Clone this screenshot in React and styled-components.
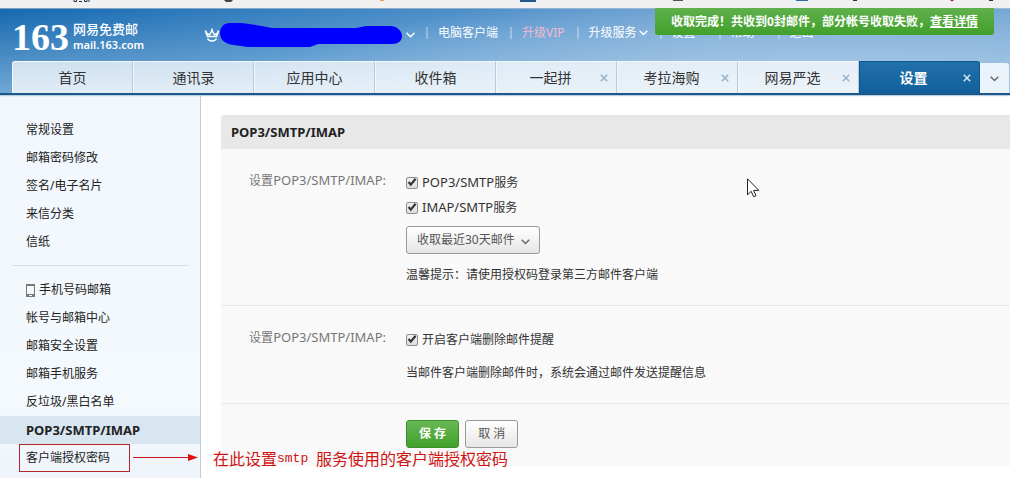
import styled, { createGlobalStyle, css } from "styled-components";

const GlobalStyle = createGlobalStyle`
  * {
    box-sizing: border-box;
  }
  body {
    margin: 0;
    background: #fff;
    color: #333;
    font: 12px/18px "Noto Sans", "Noto Sans CJK SC", sans-serif;
    overflow-x: hidden;
  }
  a {
    color: inherit;
    text-decoration: none;
  }
  button, select, input {
    font: inherit;
  }
  ul {
    list-style: none;
    margin: 0;
    padding: 0;
  }
`;

const Page = styled.div`
  display: flex;
  flex-direction: column;
  min-height: 100vh;
`;

const BrowserStrip = styled.div`
  height: 8px;
  background: #f0f0f0;
  overflow: hidden;
  svg {
    display: block;
  }
`;

const Header = styled.header`
  position: relative;
  border-bottom: 2px solid #1f5888;
  box-shadow: 0 1px 1px #b4cfe6, inset 0 1px 0 rgba(190, 200, 210, 0.6);
  background: radial-gradient(ellipse 60% 120% at 82% 100%, #a9c9e6 0%, rgba(150, 188, 224, 0) 100%),
    linear-gradient(to bottom, rgba(255, 255, 255, 0) 0%, rgba(176, 210, 236, 0.6) 100%),
    linear-gradient(to right, #1468b0 0%, #3f86c4 35%, #699fd1 70%, #6da2d3 100%);
`;

const TopRow = styled.div`
  display: flex;
  align-items: center;
  height: 53px;
  padding: 0 12px;
  color: #fff;
`;

const Logo = styled.a`
  display: flex;
  align-items: center;
  gap: 4px;
  width: 192px;
  padding-top: 4px;
  strong {
    font: bold 38px/44px "Liberation Serif", serif;
  }
  span {
    display: flex;
    flex-direction: column;
    font-size: 11px;
    font-weight: 600;
    line-height: 15px;
  }
  b {
    font-size: 13px;
    font-weight: 500;
  }
`;

const Account = styled.div`
  display: flex;
  align-items: center;
  width: 222px;
  svg {
    display: block;
    flex: none;
  }
`;

const TopLinks = styled.nav`
  display: flex;
  align-items: center;
  padding-bottom: 4px;
  white-space: nowrap;
  a {
    display: flex;
    align-items: center;
    gap: 2px;
    min-width: 59px;
    padding: 0 12px 0 10px;
    border-left: 2px solid rgba(255, 255, 255, 0.3);
    line-height: 12px;
  }
`;

const VipLink = styled.a`
  color: #f5b9cf;
`;

const Notice = styled.div`
  position: absolute;
  top: 0;
  right: 16px;
  padding: 4px 16px;
  border-radius: 0 0 3px 3px;
  background: linear-gradient(#60b04c, #41a02b);
  color: #fff;
  font-weight: bold;
  line-height: 19px;
  white-space: nowrap;
  a {
    text-decoration: underline;
  }
`;

const Tabs = styled.nav`
  display: flex;
  align-items: flex-end;
  padding: 0 1px 0 12px;
`;

const Tab = styled.div`
  display: flex;
  flex: 1;
  align-items: center;
  height: 32px;
  border-top: 1px solid #f2f8fc;
  border-right: 1px solid #b5cbdd;
  border-left: 1px solid #f2f8fc;
  background: linear-gradient(to bottom, rgba(255, 255, 255, 0.72), rgba(255, 255, 255, 0.78));
  font-size: 14px;
  &:first-child {
    border-top-left-radius: 3px;
  }
  a {
    flex: 1;
    padding-right: ${(props) => (props.$closable ? "12px" : "0")};
    text-align: center;
  }
  button {
    width: 24px;
    margin-left: -24px;
    padding: 0;
    border: 0;
    background: none;
    color: #98b4cb;
    line-height: 0;
  }
  ${(props) =>
    props.$active &&
    css`
      border-color: #10558f;
      border-radius: 0 3px 0 0;
      background: linear-gradient(#2270ab, #10609d);
      color: #fff;
      font-weight: bold;
      button {
        color: #d3e3f0;
      }
    `}
`;

const MoreTabs = styled.button`
  width: 29px;
  height: 30px;
  padding: 0;
  border: 0;
  border-radius: 0 3px 0 0;
  background: #ebf3fa;
  color: #666;
`;

const Body = styled.div`
  display: flex;
  flex: 1;
`;

const Sidebar = styled.aside`
  flex: none;
  width: 201px;
  padding: 21px 0 6px;
  border-right: 1px solid #c3ccd2;
  background: linear-gradient(#f1f7fd, #f4f9fd 80%, #eef4fa);
  color: #222;
`;

const MenuGroup = styled.ul`
  & + & {
    margin: 9px 0 0;
    padding-top: 11px;
    position: relative;
  }
  & + &::before {
    content: "";
    position: absolute;
    top: 0;
    left: 12px;
    right: 11px;
    border-top: 1px solid #d9e1e6;
  }
`;

const MenuItem = styled.li`
  position: relative;
  padding-left: 26px;
  line-height: 28px;
  a {
    display: flex;
    align-items: center;
    gap: 4px;
  }
  ${(props) =>
    props.$active &&
    css`
      background: #d8e6f1;
      font-size: 13px;
      font-weight: bold;
    `}
`;

const Callout = styled.div`
  position: absolute;
  z-index: 1;
  top: 0;
  left: 19px;
  display: flex;
  align-items: center;
  color: #d01414;
  font: 16px/28px "Noto Sans CJK SC", sans-serif;
  white-space: nowrap;
  pointer-events: none;
  i {
    width: 111px;
    height: 28px;
    border: 1px solid #b5262c;
  }
  svg {
    margin: 0 14px 0 3px;
  }
  code {
    font: 13px "Liberation Mono", monospace;
    white-space: pre;
  }
`;

const Main = styled.main`
  flex: 1;
  padding: 20px 0 12px 20px;
`;

const Panel = styled.form`
  border-radius: 3px 0 0 0;
  background: #f9f9f9;
  overflow: hidden;
  h2 {
    margin: 0;
    padding: 0 10px;
    background: #e8e8e8;
    color: #222;
    font-size: 13px;
    line-height: 34px;
  }
`;

const Section = styled.section`
  display: flex;
  gap: 20px;
  padding: 21px 0 19px;
  border-bottom: 1px solid #e9e9e9;
`;

const SectionLabel = styled.div`
  width: 165px;
  color: #777;
  line-height: 20px;
  text-align: right;
`;

const Latin = styled.span`
  font-size: 13px;
`;

const Fields = styled.div`
  display: flex;
  flex-direction: column;
  align-items: flex-start;
  p {
    margin: 10px 0 0;
    line-height: 22px;
  }
`;

const CheckLabel = styled.label`
  position: relative;
  display: flex;
  align-items: center;
  gap: 4px;
  height: 25px;
  input {
    appearance: none;
    width: 12px;
    height: 12px;
    margin: 0;
    border: 1px solid #8f8f8f;
    border-radius: 2px;
    background: linear-gradient(#f1f1f1, #dcdcdc);
  }
  svg {
    position: absolute;
    left: 0;
    top: 6px;
    pointer-events: none;
  }
`;

const SelectBox = styled.div`
  position: relative;
  margin-top: 6px;
  select {
    display: block;
    appearance: none;
    width: 134px;
    height: 28px;
    padding: 0 10px;
    border: 1px solid #999;
    border-radius: 3px;
    background: linear-gradient(#fff, #e6e6e6);
    color: #555;
  }
  svg {
    position: absolute;
    right: 10px;
    top: 13px;
    color: #666;
    pointer-events: none;
  }
`;

const Actions = styled.div`
  display: flex;
  gap: 6px;
  padding: 16px 0 18px 185px;
`;

const Button = styled.button`
  height: 28px;
  padding: 0 12px;
  border: 1px solid ${(props) => (props.$primary ? "#3c8f2a" : "#999")};
  border-radius: 3px;
  background: ${(props) => (props.$primary ? "linear-gradient(#68b855, #41a02b)" : "linear-gradient(#fff, #e6e6e6)")};
  color: ${(props) => (props.$primary ? "#fff" : "#555")};
  font-weight: ${(props) => (props.$primary ? "bold" : "normal")};
`;

const Pointer = styled.svg`
  position: absolute;
  left: 747px;
  top: 178px;
`;

const Chevron = () => (
  <svg width="9" height="6" viewBox="0 0 9 6" fill="none" stroke="currentColor" strokeWidth="1.4">
    <path d="M.7.8 4.5 4.6 8.3.8" />
  </svg>
);

const Cross = () => (
  <svg width="8" height="8" viewBox="0 0 8 8" fill="none" stroke="currentColor" strokeWidth="1.6">
    <path d="M.8.8l6.4 6.4M7.2.8.8 7.2" />
  </svg>
);

const tabs = [
  { name: "首页" },
  { name: "通讯录" },
  { name: "应用中心" },
  { name: "收件箱" },
  { name: "一起拼", close: true },
  { name: "考拉海购", close: true },
  { name: "网易严选", close: true },
  { name: "设置", close: true, active: true },
];

const basicMenu = ["常规设置", "邮箱密码修改", "签名/电子名片", "来信分类", "信纸"];

const accountMenu = [
  "手机号码邮箱",
  "帐号与邮箱中心",
  "邮箱安全设置",
  "邮箱手机服务",
  "反垃圾/黑白名单",
  "POP3/SMTP/IMAP",
  "客户端授权密码",
];

function Check({ children }) {
  return (
    <CheckLabel>
      <input type="checkbox" defaultChecked />
      <svg width="12" height="12" viewBox="0 0 12 12" fill="none" stroke="#333" strokeWidth="2.2">
        <path d="M2.6 6 4.8 8.6 9.6 2.8" />
      </svg>
      <span>{children}</span>
    </CheckLabel>
  );
}

function App() {
  return (
    <Page>
      <GlobalStyle />
      <BrowserStrip>
        <svg width="1010" height="8" aria-hidden="true">
          <path d="M74 0v1.500h2.500V0M79 1.500h3M84.500 0v1.500h2.500V0M89 0v2" fill="none" stroke="#1c3450" />
          <path d="M224 0h9l-2 2h-5z" fill="#444" />
          <path d="M380 0h4v1h-4z" fill="#e8a050" />
          <path d="M520 0h16v2h-16z" fill="#1f568f" />
          <path d="M673 0h10v1h-10z" fill="#555" />
          <path d="M796 0h12v1h-12z" fill="#2f6aa5" />
          <path d="M853 .5h4M989 .5h4" stroke="#333" />
          <path d="M950 0h4l-2 1.500z" fill="#b52033" />
        </svg>
      </BrowserStrip>

      <Header>
        <TopRow>
          <Logo href="#">
            <strong>163</strong>
            <span>
              <b>网易免费邮</b>
              mail.163.com
            </span>
          </Logo>
          <Account>
            <svg width="16" height="16" viewBox="0 0 16 16" fill="none" stroke="#fff" strokeWidth="1.500">
              <path d="M2 5.500 3.500 9.500h9L14 5.500 10.600 8 8 3.500 5.400 8z" />
              <path d="M3.500 11.500c1.800 3.300 7.200 3.300 9 0" />
              <path d="M1.300 4.300h1.400M7.300 2.300h1.400M13.300 4.300h1.400" />
            </svg>
            <svg width="182" height="26" viewBox="0 0 182 26">
              <path
                d="M10 1h12l14 2 16 3h84l10-2h24c7 0 12 5 12 10s-4 8-10 8H98l-8 3H28l-14-2C4 22 0 17 0 11S4 1 10 1z"
                fill="#0000fe"
              />
            </svg>
            <svg width="14" height="6" viewBox="-5 0 14 6" fill="none" stroke="#fff" strokeWidth="1.4">
              <path d="M-.5.8 3.500 4.800 7.500.8" />
            </svg>
          </Account>
          <TopLinks>
            <a href="#">电脑客户端</a>
            <VipLink href="#">升级VIP</VipLink>
            <a href="#">
              升级服务
              <Chevron />
            </a>
            <a href="#">设置</a>
            <a href="#">帮助</a>
            <a href="#">退出</a>
          </TopLinks>
        </TopRow>
        <Notice role="status">
          收取完成！共收到0封邮件，部分帐号收取失败，<a href="#">查看详情</a>
        </Notice>
        <Tabs>
          {tabs.map((tab) => (
            <Tab key={tab.name} $active={tab.active} $closable={tab.close}>
              <a href="#">{tab.name}</a>
              {tab.close && (
                <button type="button" aria-label={`关闭${tab.name}`}>
                  <Cross />
                </button>
              )}
            </Tab>
          ))}
          <MoreTabs type="button" aria-label="更多">
            <Chevron />
          </MoreTabs>
        </Tabs>
      </Header>

      <Body>
        <Sidebar>
          <MenuGroup>
            {basicMenu.map((name) => (
              <MenuItem key={name}>
                <a href="#">{name}</a>
              </MenuItem>
            ))}
          </MenuGroup>
          <MenuGroup>
            {accountMenu.map((name, i) => (
              <MenuItem key={name} $active={name === "POP3/SMTP/IMAP"}>
                <a href="#">
                  {i === 0 && (
                    <svg width="9" height="13" viewBox="0 0 9 13">
                      <path d="M0 0h9v13H0zM1 2v8h7V2zM3 11v1h3v-1z" fill="#777" fillRule="evenodd" />
                    </svg>
                  )}
                  {name}
                </a>
                {name === "客户端授权密码" && (
                  <Callout>
                    <i />
                    <svg width="66" height="8" viewBox="0 0 66 8">
                      <path d="M0 3.500h57" stroke="#c8141a" />
                      <path d="M55 0l10 3.500-10 3.500z" fill="#e80c0c" />
                    </svg>
                    在此设置<code>smtp </code>服务使用的客户端授权密码
                  </Callout>
                )}
              </MenuItem>
            ))}
          </MenuGroup>
        </Sidebar>

        <Main>
          <Panel>
            <h2>POP3/SMTP/IMAP</h2>
            <Section>
              <SectionLabel>
                设置<Latin>POP3/SMTP/IMAP:</Latin>
              </SectionLabel>
              <Fields>
                <Check>
                  <Latin>POP3/SMTP</Latin>服务
                </Check>
                <Check>
                  <Latin>IMAP/SMTP</Latin>服务
                </Check>
                <SelectBox>
                  <select aria-label="收取范围">
                    <option>收取最近30天邮件</option>
                  </select>
                  <Chevron />
                </SelectBox>
                <p>温馨提示：请使用授权码登录第三方邮件客户端</p>
              </Fields>
            </Section>
            <Section>
              <SectionLabel>
                设置<Latin>POP3/SMTP/IMAP:</Latin>
              </SectionLabel>
              <Fields>
                <Check>开启客户端删除邮件提醒</Check>
                <p>当邮件客户端删除邮件时，系统会通过邮件发送提醒信息</p>
              </Fields>
            </Section>
            <Actions>
              <Button type="button" $primary>
                保 存
              </Button>
              <Button type="button">取 消</Button>
            </Actions>
          </Panel>
        </Main>
      </Body>

      <Pointer width="13" height="20" viewBox="0 0 13 20" fill="#fff" stroke="#222">
        <path d="M.5.8v16l3.700-3.500 2.400 5.400 2.400-1-2.400-5.300h5.200z" />
      </Pointer>
    </Page>
  );
}

export default App;
